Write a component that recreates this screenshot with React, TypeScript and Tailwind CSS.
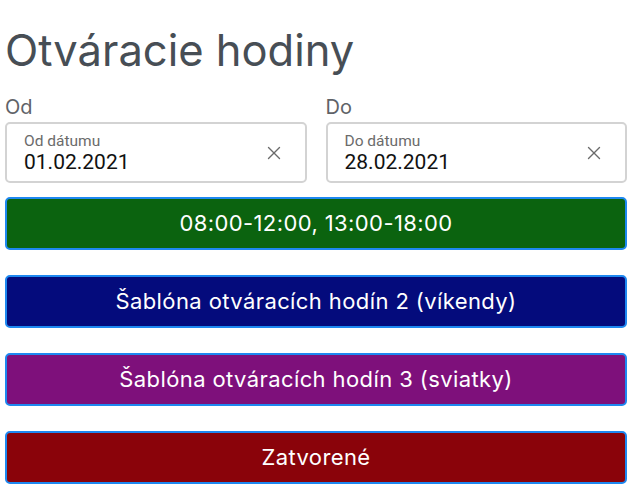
import { X } from "lucide-react";

const inter = { fontFamily: "Inter, 'Noto Sans', sans-serif" };
const roboto = { fontFamily: "Roboto, 'Noto Sans', sans-serif" };

function DateField({ label, caption, value }: { label: string; caption: string; value: string }) {
  return (
    <div className="flex flex-col">
      <div className="text-[20px] leading-[24px] text-[#5f6368] mb-[3px]">{label}</div>
      <div className="flex h-[61px] items-center rounded-[5px] border-2 border-[#d3d3d3] pl-[17px] pr-[20px]" style={roboto}>
        <div className="flex flex-1 flex-col pt-[2px]">
          <span className="text-[15.5px] leading-[17px] text-[#6b6b6b]">{caption}</span>
          <span className="text-[21px] leading-[24px] text-[#111]">{value}</span>
        </div>
        <X className="h-[22px] w-[22px] text-[#6b6b6b]" strokeWidth={1.5} />
      </div>
    </div>
  );
}

const templates = [
  { label: "08:00-12:00, 13:00-18:00", bg: "bg-[#0b630f]" },
  { label: "Šablóna otváracích hodín 2 (víkendy)", bg: "bg-[#040b7c]" },
  { label: "Šablóna otváracích hodín 3 (sviatky)", bg: "bg-[#7e107b]" },
  { label: "Zatvorené", bg: "bg-[#8a030a]" },
];

export default function App() {
  return (
    <div className="w-[642px] h-[502px] bg-white pl-[5px] pr-[15px] pt-[24px]" style={inter}>
      <h1 className="text-[43.5px] leading-[52px] text-[#474e55] font-normal">Otváracie hodiny</h1>
      <div className="mt-[19px] grid grid-cols-2 gap-[19px]">
        <DateField label="Od" caption="Od dátumu" value="01.02.2021" />
        <DateField label="Do" caption="Do dátumu" value="28.02.2021" />
      </div>
      <div className="mt-[14px] flex flex-col gap-[25px]">
        {templates.map((t) => (
          <button
            key={t.label}
            className={`flex h-[53px] items-center justify-center rounded-[5px] border-2 border-[#1e88f0] text-[22px] tracking-[0.4px] text-white ${t.bg}`}
          >
            {t.label}
          </button>
        ))}
      </div>
    </div>
  );
}
